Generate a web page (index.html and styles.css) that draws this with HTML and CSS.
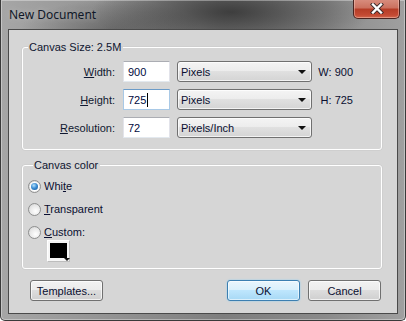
FILE: index.html
```html
<!DOCTYPE html>
<html lang="en">
<head>
  <meta charset="UTF-8" />
  <title>New Document</title>
  <link rel="stylesheet" href="styles.css">
</head>
<body>
  <div class="window">
    <div class="titlebar">
      <span class="title">New Document</span>
      <button class="close-button" type="button">
        <svg width="14" height="11" viewBox="0 0 14 11">
          <path d="M3 1.5 L11 9.5 M11 1.5 L3 9.5" stroke="#3b2a2a" stroke-width="4.2" stroke-linecap="square" fill="none"/>
          <path d="M3 1.5 L11 9.5 M11 1.5 L3 9.5" stroke="#ffffff" stroke-width="2.4" stroke-linecap="square" fill="none"/>
        </svg>
      </button>
    </div>

    <div class="client">
      <!-- Canvas size -->
      <fieldset class="group group-size">
        <legend>Canvas Size: 2.5M</legend>
        <div class="size-grid">
          <label class="field-label"><u>W</u>idth:</label>
          <div class="textbox">900</div>
          <div class="dropdown">Pixels<span class="arrow"></span></div>
          <span class="dim">W: 900</span>

          <label class="field-label"><u>H</u>eight:</label>
          <div class="textbox focused">725<span class="caret"></span></div>
          <div class="dropdown">Pixels<span class="arrow"></span></div>
          <span class="dim">H: 725</span>

          <label class="field-label"><u>R</u>esolution:</label>
          <div class="textbox">72</div>
          <div class="dropdown">Pixels/Inch<span class="arrow"></span></div>
          <span class="dim"></span>
        </div>
      </fieldset>

      <!-- Canvas color -->
      <fieldset class="group group-color">
        <legend>Canvas color</legend>
        <div class="radio-row"><span class="radio checked"><span class="dot"></span></span><span>Whi<u>t</u>e</span></div>
        <div class="radio-row"><span class="radio"></span><span><u>T</u>ransparent</span></div>
        <div class="radio-row"><span class="radio"></span><span><u>C</u>ustom:</span></div>
        <div class="swatch"><div class="swatch-fill"></div><span class="swatch-arrow"></span></div>
      </fieldset>

      <div class="button-row">
        <button type="button" class="btn">Templates...</button>
        <div class="button-right">
          <button type="button" class="btn btn-default">OK</button>
          <button type="button" class="btn">Cancel</button>
        </div>
      </div>
    </div>
  </div>
</body>
</html>
```

FILE: styles.css
```css
html, body {
  margin: 0;
  padding: 0;
  background: #ffffff;
}
body {
  width: 406px;
  height: 321px;
  overflow: hidden;
  font-family: "Liberation Sans", Arial, sans-serif;
  font-size: 11px;
  color: #111;
}
.window {
  box-sizing: border-box;
  width: 406px;
  height: 321px;
  padding: 0 7px 6px 7px;
  border: 1px solid #3a3a3a;
  border-top: none;
  border-radius: 0 0 5px 5px;
  background:
    radial-gradient(ellipse 140px 40px at 230px 12px, rgba(40,40,40,0.75), rgba(40,40,40,0) 100%),
    radial-gradient(ellipse 90px 30px at 110px 30px, rgba(60,60,60,0.45), rgba(60,60,60,0) 100%),
    linear-gradient(to right, #a6a6a6 0%, #949494 25%, #7e7e7e 55%, #8a8a8a 80%, #a0a0a0 100%);
  box-shadow: inset 0 0 0 1px rgba(255,255,255,0.35);
  display: flex;
  flex-direction: column;
}
.titlebar {
  height: 29px;
  display: flex;
  justify-content: space-between;
  align-items: flex-start;
  flex-shrink: 0;
  margin-right: -1px;
}
.title {
  font-family: "Noto Sans", "Open Sans", sans-serif;
  font-size: 12px;
  line-height: 16px;
  color: #101828;
  padding: 7px 0 0 1px;
  text-shadow: 0 0 6px rgba(255,255,255,0.35);
}
.close-button {
  width: 47px;
  height: 20px;
  padding: 0;
  margin: -1px -1px 0 0;
  border: 1px solid #4a2420;
  border-top: none;
  border-radius: 0 0 5px 5px;
  background: linear-gradient(#d98f80 0%, #cc7260 45%, #b63d27 55%, #c44a33 85%, #d2694f 100%);
  box-shadow: inset 0 0 0 1px rgba(255,220,210,0.4);
  display: flex;
  align-items: center;
  justify-content: center;
}
.client {
  flex: 1;
  border: 1px solid #4a4a4a;
  background: #d6d6d6;
  display: flex;
  flex-direction: column;
}
.group {
  margin: 0 15px 0 13px;
  padding: 0;
  border: 1px solid #ffffff;
  border-radius: 3px;
  box-shadow: 0 0 0 0.5px rgba(180,180,180,0.4);
}
.group legend {
  margin-left: 5px;
  padding: 0 2px 0 1px;
  line-height: 13px;
  color: #0f1530;
}
.group-size {
  margin-top: 11px;
  padding: 7px 0 11px 0;
}
.size-grid {
  display: grid;
  grid-template-columns: 94px 47px 136px 35px;
  grid-auto-rows: 21px;
  column-gap: 6px;
  row-gap: 7px;
}
.size-grid .dropdown {
  margin-left: 1px;
}
.field-label {
  text-align: right;
  align-self: center;
  padding-right: 2px;
  color: #101830;
}
.textbox {
  box-sizing: border-box;
  background: #ffffff;
  border: 1px solid #e2e3ea;
  border-top-color: #abadb3;
  border-bottom-color: #e3e9ef;
  padding-left: 4px;
  display: flex;
  align-items: center;
  color: #000a40;
}
.textbox.focused {
  border-color: #a9c9e6;
  border-top-color: #6b9bc8;
}
.caret {
  display: inline-block;
  width: 1px;
  height: 14px;
  background: #000;
  margin-left: 1px;
}
.dropdown {
  box-sizing: border-box;
  border: 1px solid #707070;
  border-radius: 3px;
  background: linear-gradient(#f4f4f4 0%, #ececec 49%, #e0e0e0 50%, #d4d4d4 100%);
  box-shadow: inset 0 0 0 1px rgba(255,255,255,0.7);
  padding: 0 5px 0 3px;
  display: flex;
  align-items: center;
  justify-content: space-between;
  color: #0a0f30;
}
.arrow {
  width: 0;
  height: 0;
  border-left: 4px solid transparent;
  border-right: 4px solid transparent;
  border-top: 4px solid #111;
}
.dim {
  align-self: center;
  text-align: right;
  white-space: nowrap;
  color: #0a0f30;
}
.group-color {
  margin-top: 9px;
  padding: 6px 0 6px 5px;
  display: flex;
  flex-direction: column;
  gap: 7px;
}
.radio-row {
  height: 16px;
  display: flex;
  align-items: center;
  gap: 3px;
  color: #0a0f30;
}
.radio {
  box-sizing: border-box;
  width: 13px;
  height: 13px;
  border-radius: 50%;
  border: 1px solid #8e8f8f;
  background: radial-gradient(circle at 60% 65%, #ffffff 0%, #e6e6e6 60%, #c8c8c8 100%);
  display: flex;
  align-items: center;
  justify-content: center;
}
.dot {
  width: 7px;
  height: 7px;
  border-radius: 50%;
  background: radial-gradient(circle at 40% 35%, #b8e2fb 0%, #3d8fd6 45%, #0d4f93 100%);
  box-shadow: 0 0 0 1px #ffffff;
}
.swatch {
  position: relative;
  box-sizing: border-box;
  width: 23px;
  height: 22px;
  margin: -7px 0 0 19px;
  padding: 2px 2px 3px 2px;
  background: #f6f6f6;
  border: 1px solid #bdbdbd;
  border-top-color: #ffffff;
  border-left-color: #ffffff;
}
.swatch-fill {
  width: 100%;
  height: 100%;
  background: #000;
}
.swatch-arrow {
  position: absolute;
  right: -1px;
  bottom: 0px;
  width: 0;
  height: 0;
  border-left: 3px solid transparent;
  border-right: 3px solid transparent;
  border-top: 3px solid #111;
}
.button-row {
  display: flex;
  justify-content: space-between;
  padding: 11px 16px 0 21px;
}
.button-right {
  display: flex;
  gap: 8px;
}
.btn {
  box-sizing: border-box;
  width: 73px;
  height: 21px;
  padding: 0;
  font-family: "Liberation Sans", Arial, sans-serif;
  font-size: 11px;
  color: #0a0f30;
  border: 1px solid #707070;
  border-radius: 3px;
  background: linear-gradient(#f2f2f2 0%, #ebebeb 49%, #dddddd 50%, #cfcfcf 100%);
  box-shadow: inset 0 0 0 1px rgba(255,255,255,0.7);
}
.btn-default {
  border-color: #3c7fb1;
  background: linear-gradient(#eaf6fd 0%, #d9f0fc 49%, #bee6fd 50%, #a7d9f5 100%);
  box-shadow: inset 0 0 0 1px rgba(255,255,255,0.6), 0 0 2px #8fd0f5;
}
```
